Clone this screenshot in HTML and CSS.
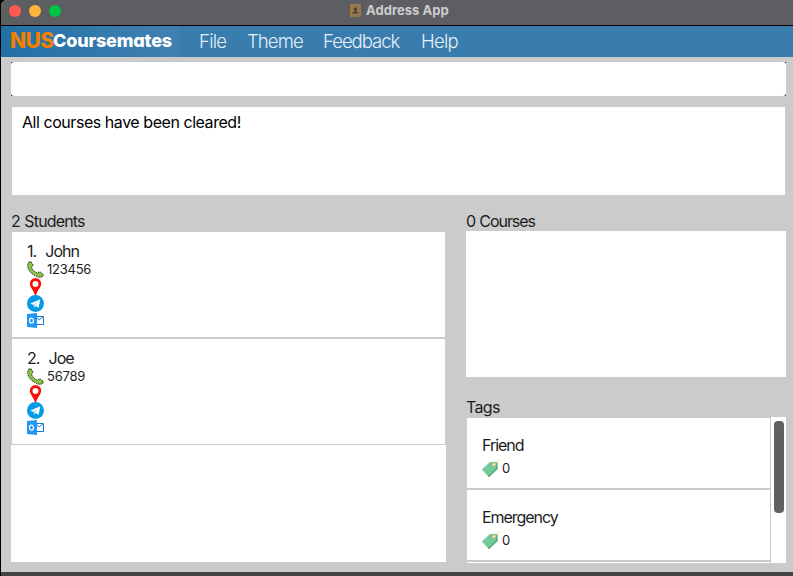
FILE: index.html
```html
<!DOCTYPE html>
<html lang="en">
<head>
<meta charset="utf-8">
<title>Address App</title>
<link rel="stylesheet" href="styles.css">
</head>
<body>
<svg class="defs" width="0" height="0" aria-hidden="true">
  <symbol id="phone" viewBox="0 0 17 17">
    <path d="M2 1 4 .7 6 3.8 5.7 5 4.3 6.2Q6 10 10.2 12.2L12 11 13.5 11.2 16.3 13.4 16 15.2Q13.5 17 10 15.6 2.3 12.3.8 6 .2 2.6 2 1Z" fill="#8bc34a" stroke="#172b0b" stroke-width="1" stroke-dasharray="1.5 .8"/>
  </symbol>
  <symbol id="pin" viewBox="0 0 17 17">
    <path fill="#fb0d03" fill-rule="evenodd" d="M8.5 0A5.7 5.7 0 0 0 2.8 5.7C2.8 9.2 7 12.5 7.8 17H9.2C10 12.5 14.2 9.2 14.2 5.7A5.7 5.7 0 0 0 8.5 0ZM8.5 2.9A3 3 0 1 1 8.5 8.9 3 3 0 0 1 8.5 2.9Z"/>
  </symbol>
  <symbol id="telegram" viewBox="0 0 17 17">
    <circle cx="8.5" cy="8.5" r="8.5" fill="#039be5"/>
    <path fill="#fff" d="M3.4 8.6 13.3 4.2 11.6 13 8.9 11 7.2 12.5 6.6 9.9Z"/>
    <path d="M6.7 10 11.2 6.3 7.6 10.4 7.1 12.2Z" fill="#6fbfeb"/>
  </symbol>
  <symbol id="outlook" viewBox="0 0 17 15">
    <path d="M9 3.5H16.5V11.5H9" fill="#fff" stroke="#1976d2" stroke-width="1"/>
    <path d="M10 5 12.2 6.8 16 3.8" fill="none" stroke="#1976d2" stroke-width="1"/>
    <path d="M0 1 10 0V15L0 14Z" fill="#2196f3"/>
    <ellipse cx="4.5" cy="7.6" rx="2" ry="2.5" fill="none" stroke="#fff" stroke-width="1.2"/>
  </symbol>
  <symbol id="tag" viewBox="0 0 18 18">
    <path d="M.8 9.6 9.3 1.8 15.5 2 16.5 8.8 7.8 17Z" fill="#78c99a"/>
    <path d="M15.3 2 16.6 3V9L7.8 17.3 6.9 16.2 15 8.5Z" fill="#4eaa78"/>
    <circle cx="13" cy="4.6" r="1.5" fill="#fff" stroke="#e8b64c" stroke-width=".7"/>
    <path d="M13 4.8 17.6.2" stroke="#f4b95a" stroke-width="1"/>
  </symbol>
</svg>
<div class="window">
  <header class="titlebar">
    <div class="lights"><i class="close"></i><i class="minimise"></i><i class="expand"></i></div>
    <div class="caption">
      <svg width="13" height="13" viewBox="0 0 13 13"><rect width="13" height="13" rx="1" fill="#94794f"/><path d="M0 0H2V13H0Z" fill="#685844"/><circle cx="7.5" cy="5" r="1.7" fill="#4b4338"/><path d="M6.8 6H8.2V7.5L10.5 8.3V9.5H4.5V8.3L6.8 7.5Z" fill="#4b4338"/></svg>
      <span>Address App</span>
    </div>
  </header>
  <nav class="menubar">
    <div class="logo"><span class="nus">NUS</span><span class="mates">Coursemates</span></div>
    <span class="menu file">File</span><span class="menu theme">Theme</span><span class="menu feedback">Feedback</span><span class="menu help">Help</span>
  </nav>
  <main class="content">
    <div class="command"><div class="field"></div></div>
    <div class="result"><span>All courses have been cleared!</span></div>
    <div class="panels">
      <section class="students">
        <h2><span class="t-students">2 Students</span></h2>
        <div class="list">
          <article class="student">
            <h3><span>1.</span><span>John</span></h3>
            <p><svg><use href="#phone"/></svg><span>123456</span></p>
            <p><svg><use href="#pin"/></svg></p>
            <p><svg><use href="#telegram"/></svg></p>
            <p><svg class="mail"><use href="#outlook"/></svg></p>
          </article>
          <article class="student second">
            <h3><span>2.</span><span>Joe</span></h3>
            <p><svg><use href="#phone"/></svg><span>56789</span></p>
            <p><svg><use href="#pin"/></svg></p>
            <p><svg><use href="#telegram"/></svg></p>
            <p><svg class="mail"><use href="#outlook"/></svg></p>
          </article>
        </div>
      </section>
      <div class="side">
        <section>
          <h2><span>0 Courses</span></h2>
          <div class="courses"></div>
        </section>
        <section class="tags">
          <h2><span class="t-tags">Tags</span></h2>
          <div class="tagbox">
            <div class="taglist">
              <article class="tag"><h3><span>Friend</span></h3><p><svg><use href="#tag"/></svg><span>0</span></p></article>
              <article class="tag"><h3><span>Emergency</span></h3><p><svg><use href="#tag"/></svg><span>0</span></p></article>
              <div class="peek"></div>
            </div>
            <div class="scrollbar"><div class="thumb"></div></div>
          </div>
        </section>
      </div>
    </div>
  </main>
  <footer class="edge"></footer>
</div>
</body>
</html>
```
FILE: styles.css
```css
* { box-sizing: border-box; margin: 0; padding: 0; }
body {
  width: 793px; height: 576px; overflow: hidden;
  background: #000;
  font-family: Inter, "Liberation Sans", sans-serif;
  color: #1d1d1d;
}
.defs { display: block; width: 0; height: 0; }
span { white-space: nowrap; }
.window { margin-left: 1px; height: 576px; display: flex; flex-direction: column; background: #cbcbcb; border-radius: 6px 0 0 0; overflow: hidden; }

.titlebar { height: 26px; background: #5d5e61; border-bottom: 1px solid #000; display: flex; align-items: flex-start; }
.lights { display: flex; gap: 8px; padding: 5px 0 0 8px; width: 347px; }
.lights i { width: 12px; height: 12px; border-radius: 50%; }
.close { background: #ff5952; }
.minimise { background: #ffb53a; }
.expand { background: #00c543; }
.caption { display: flex; gap: 5px; padding-top: 4px; font-size: 13px; line-height: 13px; font-weight: 700; color: #cdcdcf; letter-spacing: .05px; }

.menubar { height: 31px; background: #397cae; display: flex; color: #e6eff6; font-size: 18.5px; line-height: 30px; font-weight: 350; }
.logo { width: 179px; padding-left: 9px; background: linear-gradient(70deg, #216fa5, #3f80b0 90%); font-weight: 800; display: flex; line-height: 30px; }
.nus { color: #f08000; font-size: 21px; width: 43px; letter-spacing: -.6px; }
.mates { color: #fff; font-size: 18px; letter-spacing: -.15px; font-feature-settings: "cv11"; }
.menu { display: block; letter-spacing: -.75px; }
.file { margin-left: 19px; width: 48px; }
.theme { width: 76px; letter-spacing: -.9px; }
.feedback { width: 98px; letter-spacing: -1px; }

.content { flex: 1; padding: 5px 7px 0 10px; }
.command { height: 34px; background: #333; width: 775px; }
.field { height: 34px; background: #fff; border-radius: 3px; }
.result { margin: 11px 1px 0; height: 88px; background: #fff; color: #000; padding: 5px 10px; font-size: 16px; line-height: 20px; letter-spacing: -.45px; }
.panels { display: flex; gap: 20px; margin-top: 16px; }
h2, h3 { font-size: 16px; font-weight: 400; line-height: 20px; letter-spacing: -1.05px; }
h2 { height: 20px; word-spacing: .8px; }
.students { width: 435px; }
.students .list { height: 330px; background: linear-gradient(90deg, #cbcbcb 1px, #fff 1px, #fff 434px, #cbcbcb 434px) 0 0 / 100% 213px no-repeat, #fff; }
.students h2 { height: 21px; }
.t-students { letter-spacing: -.85px; }
.t-tags { letter-spacing: -.65px; }
.student { height: 107px; border-bottom: 2px solid #cbcbcb; padding: 10px 0 0 16px; }
.student.second { height: 106px; border-bottom-width: 1px; }
.student h3 { display: flex; gap: 9px; height: 19px; line-height: 18px; letter-spacing: -.95px; }
.student p { height: 17px; display: flex; font-size: 13px; line-height: 17px; gap: 3px; letter-spacing: -.25px; }
.student svg { width: 17px; height: 17px; }
.student .mail { height: 15px; margin-top: 1px; }
.side { width: 320px; }
.courses { height: 146px; background: #fff; }
.tags { margin-top: 20px; }
.tagbox { display: flex; height: 146px; }
.taglist { width: 305px; padding: 1px 1px 0; }
.tag { height: 70px; margin-bottom: 2px; background: #fff; padding: 17px 0 0 15px; }
.tag h3 { height: 25px; line-height: 20px; }
.tag p { display: flex; gap: 3px; font-size: 13px; line-height: 17px; }
.tag svg { width: 18px; height: 18px; margin-left: -1px; }
.peek { height: 1px; background: #fff; }
.scrollbar { width: 15px; background: #fff; padding: 4px 2px 0 3px; }
.thumb { height: 92px; border-radius: 4px; background: #606060; }
.edge { height: 4px; background: #434343; }
```
